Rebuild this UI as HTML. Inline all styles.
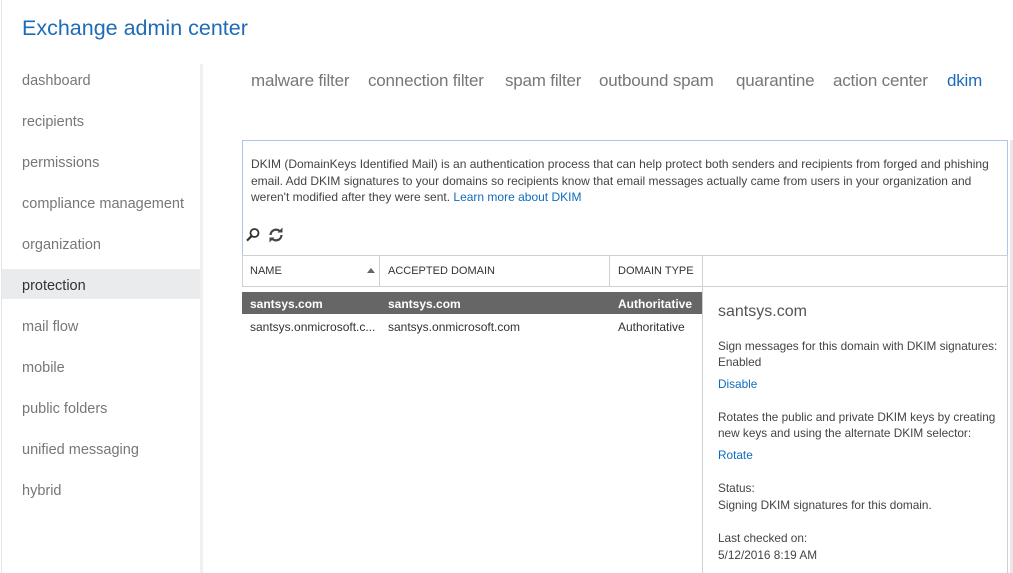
<!DOCTYPE html>
<html><head><meta charset="utf-8"><style>
*{margin:0;padding:0;box-sizing:border-box}
body{width:1013px;height:573px;overflow:hidden;background:#fff;font-family:"Liberation Sans",sans-serif;position:relative;color:#333}
.a{position:absolute;white-space:nowrap}
.nav{left:22px;font-size:14.5px;color:#777}
.tab{top:71px;font-size:17px;color:#777;letter-spacing:-0.2px}
.s{font-size:12px;color:#333}
.h{font-size:11px;color:#333}
.lnk{color:#0f6cbd}
.d{font-size:11.8px}
</style></head><body>
<div class="a" style="left:1px;top:0;width:1px;height:573px;background:#e6e6e6"></div>
<div class="a" style="left:22px;top:16px;font-size:21.5px;color:#1e6bb8">Exchange admin center</div>
<div class="a" style="left:200px;top:64px;width:3px;height:509px;background:#f0f0f0"></div>
<div class="a" style="left:2px;top:269px;width:198px;height:30px;background:#eaebed"></div>
<div class="a nav" style="top:73px">dashboard</div>
<div class="a nav" style="top:114px">recipients</div>
<div class="a nav" style="top:155px">permissions</div>
<div class="a nav" style="top:196px">compliance management</div>
<div class="a nav" style="top:237px">organization</div>
<div class="a nav" style="top:278px;color:#333">protection</div>
<div class="a nav" style="top:319px">mail flow</div>
<div class="a nav" style="top:360px">mobile</div>
<div class="a nav" style="top:401px">public folders</div>
<div class="a nav" style="top:442px">unified messaging</div>
<div class="a nav" style="top:483px">hybrid</div>

<div class="a tab" style="left:251px">malware filter</div>
<div class="a tab" style="left:368px">connection filter</div>
<div class="a tab" style="left:505px">spam filter</div>
<div class="a tab" style="left:599px">outbound spam</div>
<div class="a tab" style="left:736px">quarantine</div>
<div class="a tab" style="left:833px">action center</div>
<div class="a tab" style="left:947px;color:#1e6bb8">dkim</div>

<div class="a" style="left:242px;top:140px;width:766px;height:116px;border:1px solid #a9c6ec;border-bottom:none"></div>
<div class="a" style="left:242px;top:256px;width:1px;height:30px;background:#d0d0d0"></div>
<div class="a" style="left:1007px;top:256px;width:1px;height:317px;background:#d0d0d0"></div>
<div class="a" style="left:1010px;top:140px;width:3px;height:433px;background:#e8e8e8"></div>
<div class="a s" style="left:251px;top:156px;line-height:16.5px;white-space:normal;width:750px;color:#444">DKIM (DomainKeys Identified Mail) is an authentication process that can help protect both senders and recipients from forged and phishing email. Add DKIM signatures to your domains so recipients know that email messages actually came from users in your organization and weren't modified after they were sent. <span class="lnk">Learn more about DKIM</span></div>
<svg class="a" style="left:245px;top:227px" width="16" height="16" viewBox="0 0 16 16"><circle cx="9.5" cy="6" r="4" fill="none" stroke="#333" stroke-width="1.8"/><path d="M6.8 8.8L2 13.6" stroke="#333" stroke-width="2.2"/></svg>
<svg class="a" style="left:268px;top:227px" width="16" height="16" viewBox="0 0 16 16"><path d="M2.5 8a5.5 5.5 0 0 1 10-3" fill="none" stroke="#444" stroke-width="2.2"/><path d="M9.5 5.5h5v-5z" fill="#444"/><path d="M13.5 8a5.5 5.5 0 0 1-10 3" fill="none" stroke="#444" stroke-width="2.2"/><path d="M6.5 10.5h-5v5z" fill="#444"/></svg>

<div class="a" style="left:242px;top:255px;width:766px;height:1px;background:#d0d0d0"></div>
<div class="a" style="left:242px;top:286px;width:766px;height:1px;background:#d0d0d0"></div>
<div class="a" style="left:379px;top:256px;width:1px;height:30px;background:#d0d0d0"></div>
<div class="a" style="left:609px;top:256px;width:1px;height:30px;background:#d0d0d0"></div>
<div class="a" style="left:702px;top:256px;width:1px;height:317px;background:#d0d0d0"></div>
<div class="a h" style="left:250px;top:265px">NAME</div>
<div class="a" style="left:367px;top:268px;width:0;height:0;border-left:4px solid transparent;border-right:4px solid transparent;border-bottom:5px solid #666"></div>
<div class="a h" style="left:388px;top:265px">ACCEPTED DOMAIN</div>
<div class="a h" style="left:618px;top:265px">DOMAIN TYPE</div>

<div class="a" style="left:242px;top:292px;width:460px;height:22px;background:#666"></div>
<div class="a s" style="left:250px;top:297px;color:#fff;font-weight:bold">santsys.com</div>
<div class="a s" style="left:388px;top:297px;color:#fff;font-weight:bold">santsys.com</div>
<div class="a s" style="left:618px;top:297px;color:#fff;font-weight:bold">Authoritative</div>
<div class="a s" style="left:250px;top:320px">santsys.onmicrosoft.c...</div>
<div class="a s" style="left:388px;top:320px">santsys.onmicrosoft.com</div>
<div class="a s" style="left:618px;top:320px">Authoritative</div>

<div class="a" style="left:718px;top:303px;font-size:16px;color:#555">santsys.com</div>
<div class="a s d" style="left:718px;top:338px;line-height:16px;color:#444">Sign messages for this domain with DKIM signatures:<br>Enabled</div>
<div class="a s lnk d" style="left:718px;top:377px">Disable</div>
<div class="a s d" style="left:718px;top:409px;line-height:16px;color:#444">Rotates the public and private DKIM keys by creating<br>new keys and using the alternate DKIM selector:</div>
<div class="a s lnk d" style="left:718px;top:448px">Rotate</div>
<div class="a s d" style="left:718px;top:480px;line-height:17px;color:#444">Status:<br>Signing DKIM signatures for this domain.</div>
<div class="a s d" style="left:718px;top:530px;line-height:17px;color:#444">Last checked on:<br>5/12/2016 8:19 AM</div>
</body></html>
